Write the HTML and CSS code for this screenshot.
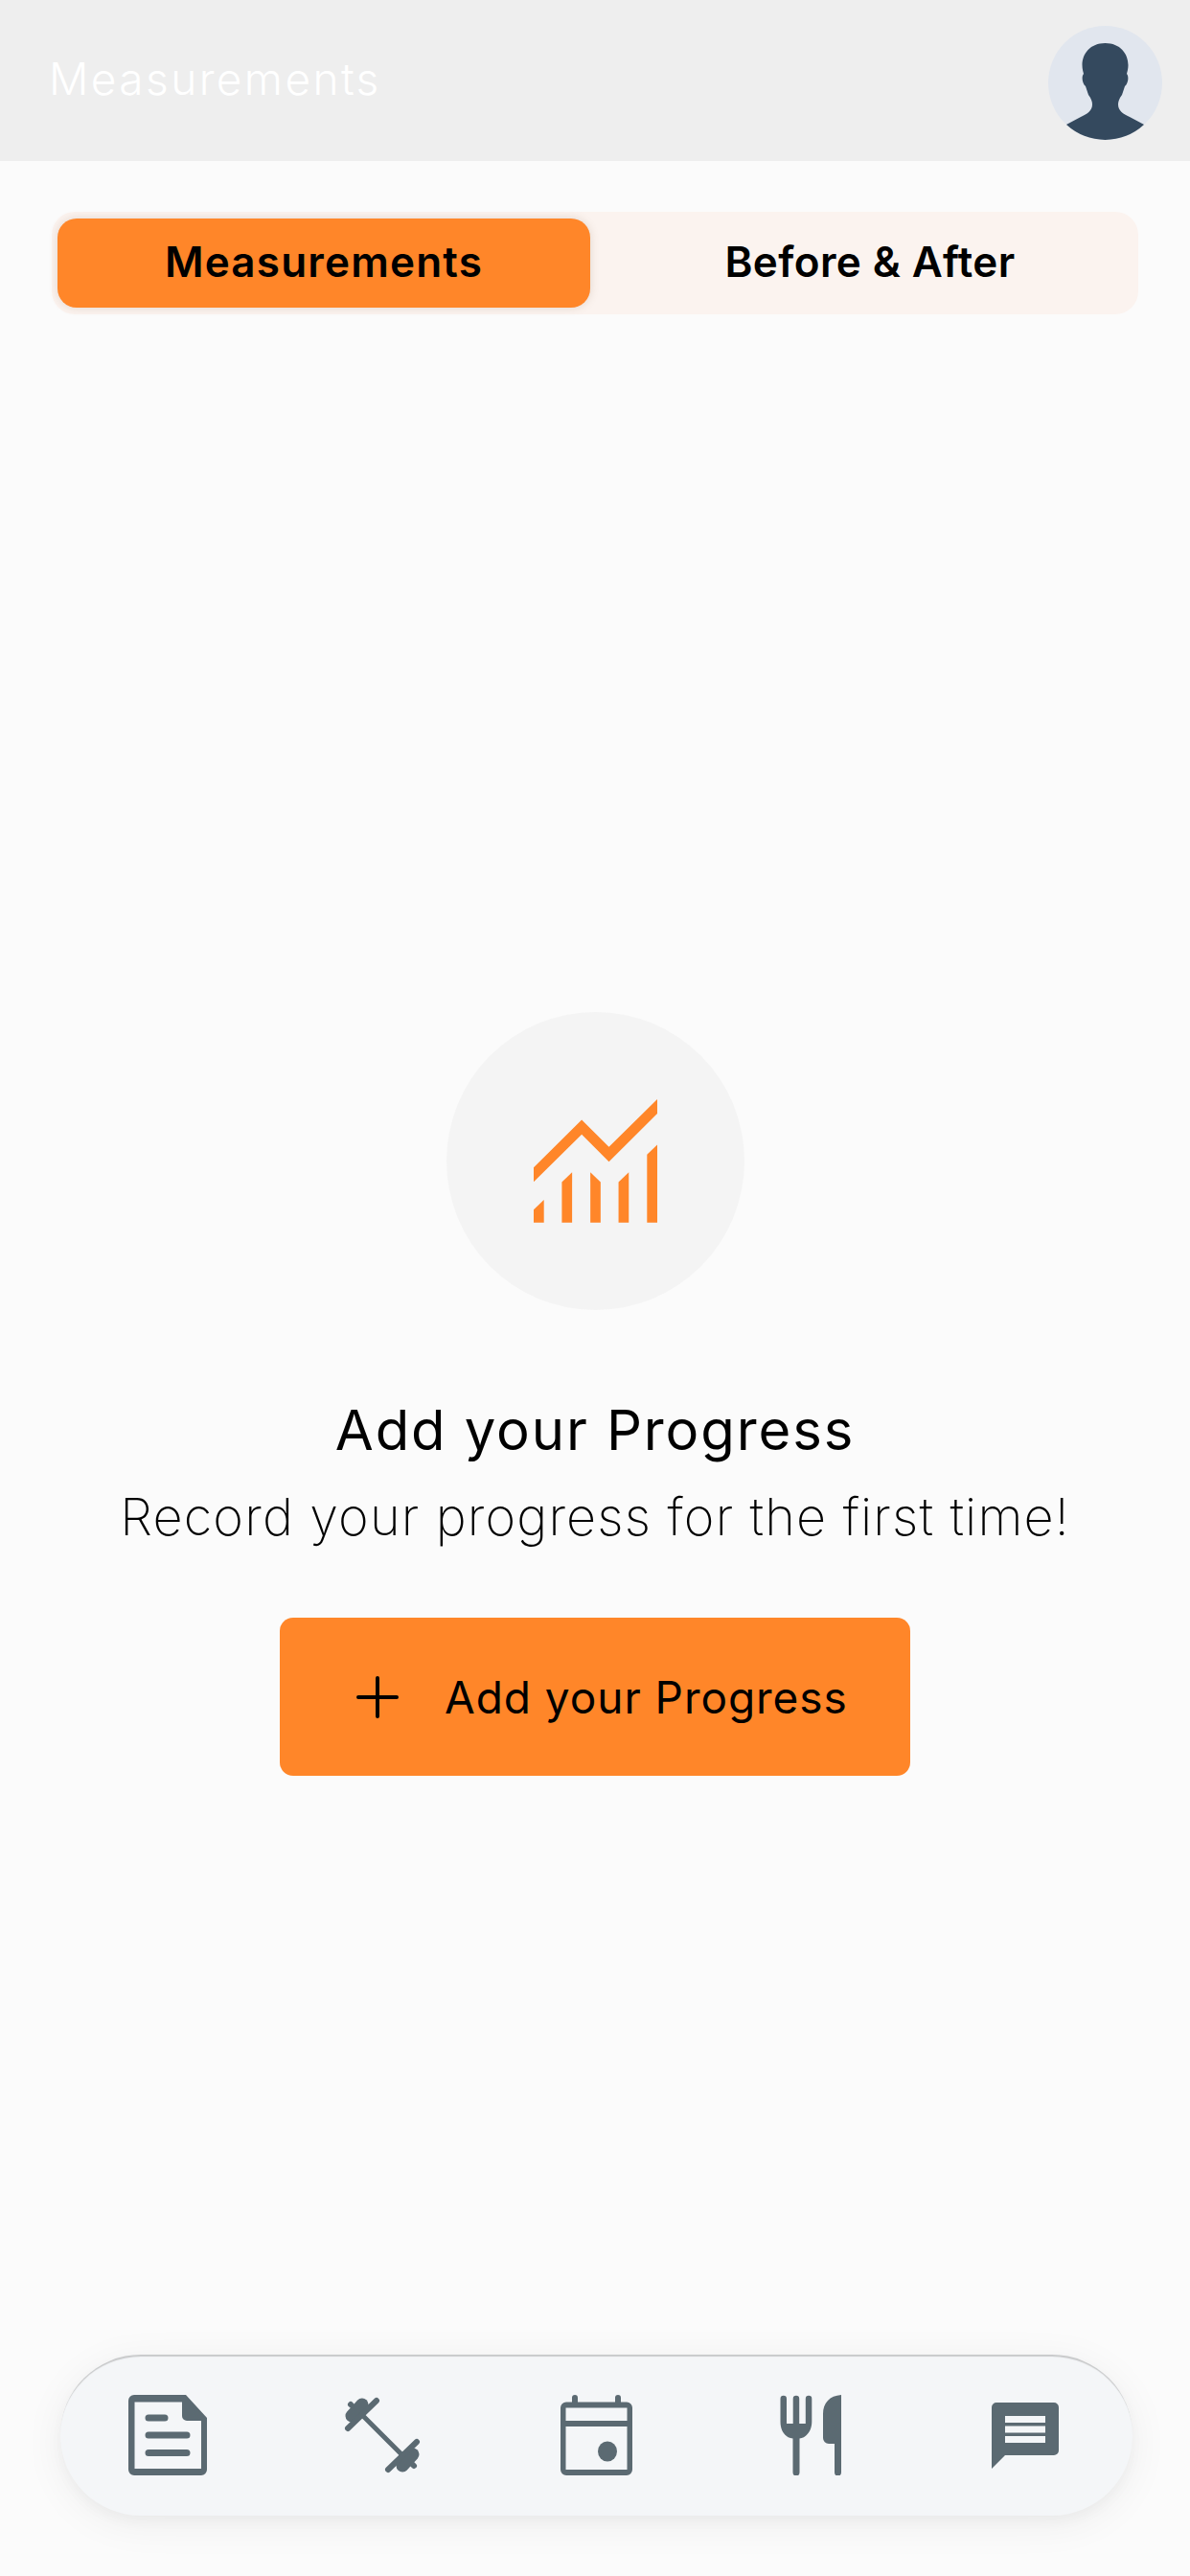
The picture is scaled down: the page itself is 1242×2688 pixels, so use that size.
FILE: index.html
```html
<!DOCTYPE html>
<html lang="en">
<head>
    <meta charset="UTF-8">
    <meta name="viewport" content="width=device-width, initial-scale=1.0">
    <link rel="stylesheet" href="styles.css">
    <title>Measurements</title>
</head>
<body>
    <header class="topbar">
        <h1 class="topbar-title">Measurements</h1>
        <svg class="avatar" viewBox="0 0 119 119">
            <circle cx="59.5" cy="59.5" r="59.5" fill="#e1e6ee"/>
            <path fill="#34495e" d="M59.5 18C44 18 35.5 29 35.5 41C35.5 45 36.5 48 37 50C34.5 53 35.5 60 39 63L42 72C45 76 46 79 46 82C46 88 41 92 34 95L19 103A59.5 59.5 0 0 0 100 103L85 95C78 92 73 88 73 82C73 79 74 76 77 72L80 63C83.5 60 84.5 53 82 50C82.5 48 83.5 45 83.5 41C83.5 29 75 18 59.5 18Z"/>
        </svg>
    </header>

    <div class="tabs">
        <div class="tab tab-active">Measurements</div>
        <div class="tab tab-other">Before &amp; After</div>
    </div>

    <main class="empty">
        <div class="empty-circle">
            <svg class="chart-icon" viewBox="352 352 386 386">
                <path fill="#ff8629" d="M352 565L502 416L587 501L738 352V397L587 547L502 462L352 610Z"/>
                <path fill="#ff8629" d="M352 697L384 666V737H352Z"/>
                <path fill="#ff8629" d="M440 611L472 580V737H440Z"/>
                <path fill="#ff8629" d="M529 580L561 611V737H529Z"/>
                <path fill="#ff8629" d="M617 611L649 580V737H617Z"/>
                <path fill="#ff8629" d="M706 525L738 494V737H706Z"/>
            </svg>
        </div>
        <h2 class="empty-title">Add your Progress</h2>
        <p class="empty-text">Record your progress for the first time!</p>
        <button class="add-btn" type="button">
            <svg class="plus-icon" viewBox="0 0 44 44">
                <path d="M22 2V42M2 22H42" stroke="#000" stroke-width="4" stroke-linecap="round" fill="none"/>
            </svg>
            <span>Add your Progress</span>
        </button>
    </main>

    <nav class="bottom-nav">
        <a class="nav-item">
            <svg width="82" height="84" viewBox="0 0 82 84">
                <path fill="#5b6a72" fill-rule="evenodd" d="M6 0H60L82 24V78A6 6 0 0 1 76 84H6A6 6 0 0 1 0 78V6A6 6 0 0 1 6 0ZM6.5 7.5V77H76V27H61A5 5 0 0 1 56 22V7.5Z"/>
                <path stroke="#5b6a72" stroke-width="7" stroke-linecap="round" d="M21 24H38M21 42H61M21 60.5H61"/>
            </svg>
        </a>
        <a class="nav-item">
            <svg width="80" height="80" viewBox="0 0 80 80">
                <g fill="none" stroke="#5b6a72" stroke-linecap="round">
                    <path stroke-width="5" d="M20 20L60 60"/>
                    <path stroke-width="13" d="M8 20L19 8"/>
                    <path stroke-width="6" d="M4 33L34 4"/>
                    <path stroke-width="6" d="M7 8L8 9"/>
                    <path stroke-width="13" d="M72 60L61 72"/>
                    <path stroke-width="6" d="M76 47L46 76"/>
                    <path stroke-width="6" d="M73 72L72 71"/>
                </g>
            </svg>
        </a>
        <a class="nav-item">
            <svg width="75" height="84" viewBox="0 0 75 84">
                <path fill="#5b6a72" fill-rule="evenodd" d="M12 7.5V3A3 3 0 0 1 18 3V7.5H57V3A3 3 0 0 1 63 3V7.5H69A6 6 0 0 1 75 13.5V78A6 6 0 0 1 69 84H6A6 6 0 0 1 0 78V13.5A6 6 0 0 1 6 7.5ZM5.5 13.5V27H69.5V13.5ZM5.5 33V78H69.5V33Z"/>
                <ellipse fill="#5b6a72" cx="49" cy="59" rx="10" ry="10.5"/>
            </svg>
        </a>
        <a class="nav-item">
            <svg width="64" height="84" viewBox="0 0 64 84">
                <path fill="#5b6a72" d="M0.5 4A3.2 3.2 0 0 1 7 4V30H13.7V4A3.2 3.2 0 0 1 20.2 4V30H26.8V4A3.2 3.2 0 0 1 33.3 4V28C33.3 38 27 45 20.5 45.5V81A3.5 3.5 0 0 1 13.5 81V45.5C6 45 0.5 38 0.5 28Z"/>
                <path fill="#5b6a72" d="M64 0C52 1 45 8 45 20V45A6 6 0 0 0 51 51H57V81A3.5 3.5 0 0 0 64 81Z"/>
            </svg>
        </a>
        <a class="nav-item">
            <svg width="70" height="69" viewBox="0 0 70 69">
                <path fill="#5b6a72" fill-rule="evenodd" d="M5 0H65A5 5 0 0 1 70 5V50A5 5 0 0 1 65 55H14L0 69V5A5 5 0 0 1 5 0ZM14 14V21H56V14ZM14 24.5V31.5H56V24.5ZM14 35V42H56V35Z"/>
            </svg>
        </a>
    </nav>
</body>
</html>
```

FILE: styles.css
```css
* {
    box-sizing: border-box;
}

body {
    margin: 0;
    height: 2688px;
    display: flex;
    flex-direction: column;
    background: #fbfbfb;
    font-family: "Inter", "Liberation Sans", sans-serif;
    color: #000;
}

.topbar {
    height: 168px;
    flex: none;
    display: flex;
    align-items: center;
    justify-content: space-between;
    padding: 4px 29px 0 51px;
    background: #eeeeee;
}

.topbar-title {
    margin: 0 0 8px;
    font-size: 46px;
    font-weight: 300;
    letter-spacing: 2.4px;
    color: #fff;
}

.avatar {
    width: 119px;
    height: 119px;
}

.tabs {
    flex: none;
    display: flex;
    height: 107px;
    margin: 53px 54px 0;
    padding: 7px 6px 7px;
    border-radius: 24px;
    background: #fbf3ef;
}

.tab {
    flex: 1;
    display: flex;
    align-items: center;
    justify-content: center;
    padding-bottom: 3px;
    font-size: 44px;
    font-weight: 600;
    border-radius: 20px;
}

.tab-active {
    flex: none;
    width: 556px;
    letter-spacing: 1.2px;
    background: #ff8629;
    box-shadow: 0 0 10px rgba(130, 100, 70, 0.2);
}

.tab-other {
    padding-left: 18px;
    letter-spacing: 0.4px;
}

.empty {
    flex: 1;
    display: flex;
    flex-direction: column;
    align-items: center;
    padding-top: 728px;
}

.empty-circle {
    width: 311px;
    height: 311px;
    display: flex;
    align-items: center;
    justify-content: center;
    border-radius: 50%;
    background: #f4f4f4;
}

.chart-icon {
    width: 129px;
    height: 129px;
}

.empty-title {
    margin: 90px 0 0;
    font-size: 58px;
    line-height: 70px;
    font-weight: 400;
    letter-spacing: 1.9px;
}

.empty-text {
    margin: 21px 0 0;
    font-size: 54px;
    line-height: 70px;
    font-weight: 200;
    letter-spacing: 1.15px;
}

.add-btn {
    width: 658px;
    height: 165px;
    margin-top: 70px;
    display: flex;
    align-items: center;
    padding: 0 0 0 80px;
    gap: 48px;
    border: 0;
    border-radius: 14px;
    background: #ff8629;
    font-family: inherit;
    font-size: 46px;
    letter-spacing: 0.95px;
    color: #000;
}

.plus-icon {
    width: 44px;
    height: 44px;
}

.bottom-nav {
    flex: none;
    height: 168px;
    margin: 0 60px 63px 63px;
    display: grid;
    grid-template-columns: repeat(5, 1fr);
    align-items: center;
    justify-items: center;
    border-radius: 84px;
    background: #f4f6f8;
    box-shadow: inset 0 3px 1px -1px #c9cacb, 0 8px 44px rgba(0, 0, 0, 0.06), 0 6px 14px rgba(0, 0, 0, 0.03);
}

.nav-item {
    display: flex;
}
```
